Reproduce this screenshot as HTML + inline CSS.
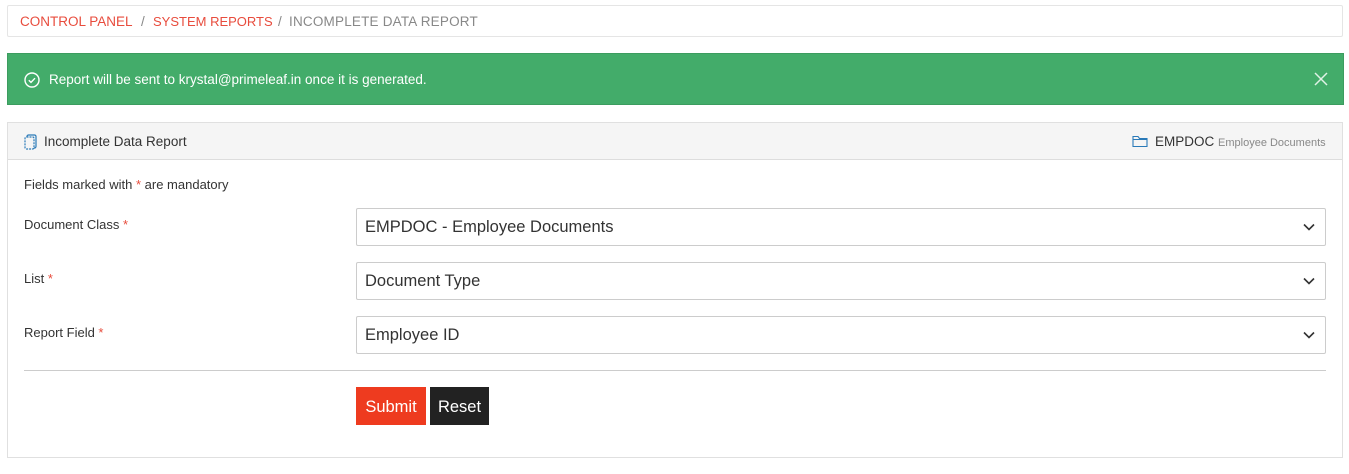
<!DOCTYPE html>
<html><head><style>
body{margin:0;background:#fff;font-family:"Liberation Sans",sans-serif;font-size:13px;color:#333;width:1349px;height:474px;overflow:hidden;position:relative}
.bc{position:absolute;left:7px;top:5px;width:1334px;height:30px;border:1px solid #e5e5e5;border-radius:2px}
.bc span{position:absolute;top:8px;font-size:13.5px}
.al{position:absolute;left:7px;top:53px;width:1335px;height:50px;background:#43ac6a;border:1px solid #3c9c5f;color:#fff}
.panel{position:absolute;left:7px;top:122px;width:1334px;height:334px;border:1px solid #e0e0e0}
.ph{height:36px;background:#f5f5f5;border-bottom:1px solid #ddd;position:relative}
.lbl{position:absolute;left:16px;font-size:13px;color:#333}
.sel{position:absolute;left:348px;width:970px;height:38px;border:1px solid #ccc;border-radius:2px;box-sizing:border-box}
.sel span{position:absolute;left:8px;top:9px;font-size:16.5px;color:#333}
.sel svg{position:absolute;right:10px;top:14px}
.r{color:#e74c3c}
</style></head><body>
<div class="bc"><span style="left:12px;color:#e84c3d">CONTROL PANEL</span><span style="left:133px;color:#888">/</span><span style="left:145px;color:#e84c3d;font-size:13px">SYSTEM REPORTS</span><span style="left:270px;color:#888">/</span><span style="left:281px;color:#888;letter-spacing:0.2px">INCOMPLETE DATA REPORT</span></div>
<div class="al">
<svg style="position:absolute;left:16px;top:18px" width="16" height="16" viewBox="0 0 16 16"><circle cx="8" cy="8" r="7" fill="none" stroke="#fff" stroke-width="1.4"/><path d="M4.8 8.2l2.2 2.2 4-4.2" fill="none" stroke="#fff" stroke-width="1.4"/></svg>
<span style="position:absolute;left:41px;top:18px;font-size:13.5px">Report will be sent to krystal@primeleaf.in once it is generated.</span>
<svg style="position:absolute;right:15px;top:18px" width="14" height="14" viewBox="0 0 14 14"><path d="M1 1l12 12M13 1L1 13" stroke="#e0f2e6" stroke-width="1.5"/></svg>
</div>
<div class="panel">
<div class="ph">
<svg style="position:absolute;left:16px;top:11px" width="13" height="16" viewBox="0 0 13 16"><rect x="3" y="1" width="9" height="13" rx="1.5" fill="none" stroke="#2a7ab8" stroke-width="1.2"/><rect x="1" y="3" width="9" height="12" rx="1.5" fill="#f5f5f5" stroke="#2a7ab8" stroke-width="1.2" stroke-dasharray="2 1"/></svg>
<span style="position:absolute;left:36px;top:11px;font-size:13.5px">Incomplete Data Report</span>
<svg style="position:absolute;left:1124px;top:12px" width="16" height="13" viewBox="0 0 16 13"><path d="M1 2.5V11.5H15V3.5H7.5L6 1.5H1Z M1 4.5H15" fill="none" stroke="#2a7ab8" stroke-width="1.1"/></svg>
<span style="position:absolute;left:1147px;top:11px;font-size:13.5px">EMPDOC <span style="color:#888;font-size:11px">Employee Documents</span></span>
</div>
<div class="lbl" style="top:54px">Fields marked with <span class="r">*</span> are mandatory</div>
<div class="lbl" style="top:94px">Document Class <span class="r">*</span></div>
<div class="sel" style="top:85px"><span>EMPDOC - Employee Documents</span><svg width="12" height="8" viewBox="0 0 12 8"><path d="M1 1.5l5 5 5-5" fill="none" stroke="#333" stroke-width="1.6"/></svg></div>
<div class="lbl" style="top:148px">List <span class="r">*</span></div>
<div class="sel" style="top:139px"><span>Document Type</span><svg width="12" height="8" viewBox="0 0 12 8"><path d="M1 1.5l5 5 5-5" fill="none" stroke="#333" stroke-width="1.6"/></svg></div>
<div class="lbl" style="top:202px">Report Field <span class="r">*</span></div>
<div class="sel" style="top:193px"><span>Employee ID</span><svg width="12" height="8" viewBox="0 0 12 8"><path d="M1 1.5l5 5 5-5" fill="none" stroke="#333" stroke-width="1.6"/></svg></div>
<div style="position:absolute;left:16px;top:247px;width:1302px;border-top:1px solid #ccc"></div>
<div style="position:absolute;left:348px;top:264px;width:70px;height:38px;background:#ee3b1f;color:#fff;font-size:16.5px;text-align:center;line-height:40px">Submit</div>
<div style="position:absolute;left:422px;top:264px;width:59px;height:38px;background:#222;color:#fff;font-size:16.5px;text-align:center;line-height:40px">Reset</div>
</div>
</body></html>
